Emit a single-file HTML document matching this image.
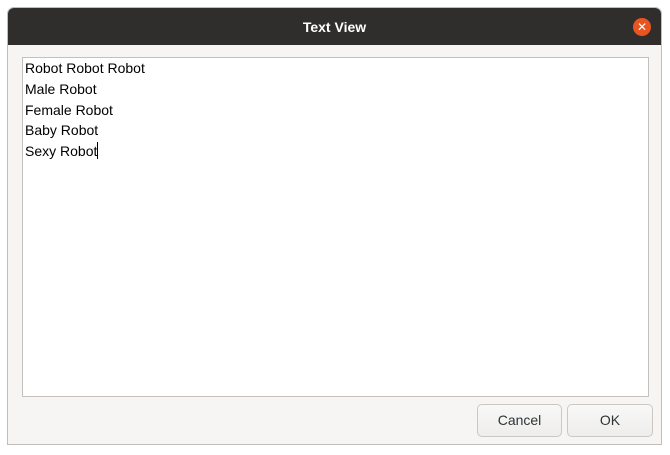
<!DOCTYPE html>
<html><head><style>
body{margin:0;width:670px;height:455px;background:#fff;position:relative;font-family:"Liberation Sans",sans-serif;overflow:hidden}
.win{position:absolute;left:7px;top:7px;width:655px;height:438px;background:#f6f5f4;border:1px solid #c0bdbb;box-sizing:border-box;border-radius:7px 7px 0 0;overflow:hidden}
.tb{position:absolute;left:0;top:0;right:0;height:37px;background:#2f2e2d;color:#fff;font-weight:bold;font-size:14px;text-align:center;line-height:38px}
.x{position:absolute;left:625px;top:10px;width:18px;height:18px;border-radius:50%;background:#e95420;color:#fff;font-size:12px;line-height:18px;text-align:center;font-weight:normal}
.tv{position:absolute;left:14px;top:49px;width:627px;height:340px;background:#fff;border:1px solid #c3c0bd;box-sizing:border-box;padding:0 0 0 2px;font-size:14px;line-height:20.8px;color:#000}
.btn{position:absolute;top:396px;height:33px;border:1px solid #cdc7c2;border-radius:5px;box-sizing:border-box;background:linear-gradient(#f8f8f7,#eeedec);font-size:14px;text-align:center;line-height:31px;color:#2e3436}
.cur{display:inline-block;width:1px;height:17px;background:#000;vertical-align:-3px}
</style></head><body>
<div class="win">
<div class="tb">Text View<div class="x">✕</div></div>
<div class="tv">Robot Robot Robot<br>Male Robot<br>Female Robot<br>Baby Robot<br>Sexy Robot<span class="cur"></span></div>
<div class="btn" style="left:469px;width:85px">Cancel</div>
<div class="btn" style="left:559px;width:86px">OK</div>
</div>
</body></html>
